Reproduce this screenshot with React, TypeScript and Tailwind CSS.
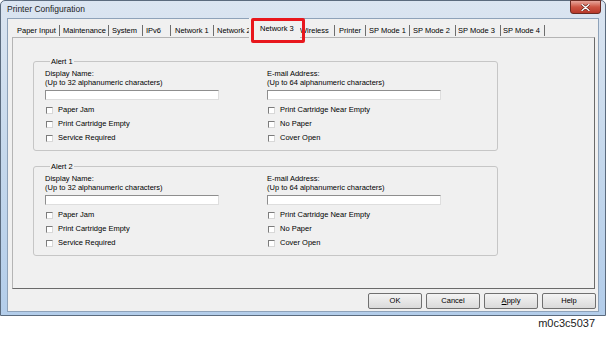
import React from "react";

const TABS = [
  { label: "Paper Input", cls: "w-[45px] pl-[2px]" },
  { label: "Maintenance", cls: "w-[49px] pl-[3px]" },
  { label: "System", cls: "w-[34px] pl-[3px]" },
  { label: "IPv6", cls: "w-[28px] pl-[3px]" },
  { label: "Network 1", cls: "w-[43px] pl-[4px]" },
  { label: "Network 2", cls: "w-[35px] pl-[3px] border-r-0" },
  { label: "Network 3", cls: "w-[51px]", selected: true },
  { label: "Wireless", cls: "w-[35px] pl-0" },
  { label: "Printer", cls: "w-[31px] pl-[4px]" },
  { label: "SP Mode 1", cls: "w-[44px] pl-[3px]" },
  { label: "SP Mode 2", cls: "w-[46px] pl-[3px]" },
  { label: "SP Mode 3", cls: "w-[45px] pl-[2px]" },
  { label: "SP Mode 4", cls: "w-[44px] pl-[2px]" },
];

const LEFT_CHECKS = ["Paper Jam", "Print Cartridge Empty", "Service Required"];
const RIGHT_CHECKS = ["Print Cartridge Near Empty", "No Paper", "Cover Open"];

function Check({ label }: { label: string }) {
  return (
    <div className="flex h-[14px] items-center">
      <span className="ml-[1px] mr-[5px] h-[7px] w-[7px] border border-[#7c7c7c] border-b-[#d8d8d8] border-r-[#d8d8d8] bg-white" />
      <span>{label}</span>
    </div>
  );
}

function Field({ title, hint, checks }: { title: string; hint: string; checks: string[] }) {
  return (
    <div className="flex flex-col">
      <div className="leading-[9px]">{title}</div>
      <div className="leading-[9px]">{hint}</div>
      <div className="mt-[3.5px] h-[10px] w-[174px] border border-[#8e8e8e] border-b-[#dedede] border-r-[#dedede] bg-white" />
      <div className="mt-[3px] flex flex-col">
        {checks.map((c) => (
          <Check key={c} label={c} />
        ))}
      </div>
    </div>
  );
}

function AlertGroup({ name, className = "" }: { name: string; className?: string }) {
  return (
    <fieldset className={`w-[465px] rounded-[3px] border border-[#c6c6c6] pb-[5px] pl-[11px] ${className}`}>
      <legend className="ml-[5px] px-[1px] leading-[9px]">{name}</legend>
      <div className="grid grid-cols-[222px_1fr] pt-[3px]">
        <Field title="Display Name:" hint="(Up to 32 alphanumeric characters)" checks={LEFT_CHECKS} />
        <Field title="E-mail Address:" hint="(Up to 64 alphanumeric characters)" checks={RIGHT_CHECKS} />
      </div>
    </fieldset>
  );
}

function Btn({ children }: { children: React.ReactNode }) {
  return (
    <div className="flex h-[16px] w-[54px] items-center justify-center rounded-[2px] border border-[#707070] bg-gradient-to-b from-[#f4f4f4] to-[#dadada]">
      {children}
    </div>
  );
}

export default function App() {
  return (
    <div
      className="h-[340px] w-[607px] overflow-hidden bg-white text-[7.5px] text-black"
      style={{ fontFamily: '"Liberation Sans", Arial, sans-serif' }}
    >
      {/* window frame */}
      <div className="relative flex h-[316px] w-[606px] flex-col rounded-t-[5px] border border-[#5b6b7e] bg-gradient-to-b from-[#dbe5f1] via-[#c5d8ec] to-[#b3cdea] px-[6px] pb-[3px]">
        <div className="flex h-[17px] items-center text-[8.5px] text-[#1c1c1c]">Printer Configuration</div>
        <div className="absolute right-[4px] top-[-1px] flex h-[14px] w-[31px] items-center justify-center rounded-b-[3px] border border-[#6a2a22] bg-gradient-to-b from-[#e6a59b] via-[#cd5443] to-[#b8392a]">
          <svg width="9" height="7" viewBox="0 0 9 7">
            <path d="M1 0.5 L8 6.5 M8 0.5 L1 6.5" stroke="#5a1a14" strokeWidth="2.6" strokeLinecap="round" />
            <path d="M1 0.5 L8 6.5 M8 0.5 L1 6.5" stroke="#ffffff" strokeWidth="1.4" strokeLinecap="round" />
          </svg>
        </div>

        {/* client area */}
        <div className="flex flex-1 flex-col border border-[#8ea2b9] bg-[#f0f0f0]">
          {/* tabs */}
          <div className="flex h-[18px] items-end pl-[7px]">
            {TABS.map((t) =>
              t.selected ? (
                <div key={t.label} className={`relative z-10 mb-[-1px] h-[20px] bg-[#f0f0f0] pl-[11px] pt-[6px] leading-[9px] ${t.cls}`}>
                  {t.label}
                  <div className="pointer-events-none absolute left-[2px] top-0 h-[25px] w-[54px] rounded-[2px] border-[3px] border-[#e8171d]" />
                </div>
              ) : (
                <div
                  key={t.label}
                  className={`mb-[1px] flex h-[11px] items-center overflow-hidden whitespace-nowrap border-r border-[#6e6e6e] leading-[9px] ${t.cls}`}
                >
                  {t.label}
                </div>
              )
            )}
          </div>

          {/* tab panel */}
          <div className="ml-[4px] mr-[3px] flex h-[252px] flex-col border border-[#b4b4b4] border-b-[#6a6a6a] border-r-[#6a6a6a] pl-[20px] pt-[18.5px]">
            <AlertGroup name="Alert 1" />
            <AlertGroup name="Alert 2" className="mt-[10.5px]" />
          </div>

          {/* buttons */}
          <div className="mt-[4px] flex justify-end gap-[4px] pr-[2px]">
            <Btn>OK</Btn>
            <Btn>Cancel</Btn>
            <Btn>
              <span>
                <span className="underline">A</span>pply
              </span>
            </Btn>
            <Btn>Help</Btn>
          </div>
        </div>
      </div>

      <div className="pr-[12px] text-right text-[11px] leading-[14px] text-[#222]">m0c3c5037</div>
    </div>
  );
}
